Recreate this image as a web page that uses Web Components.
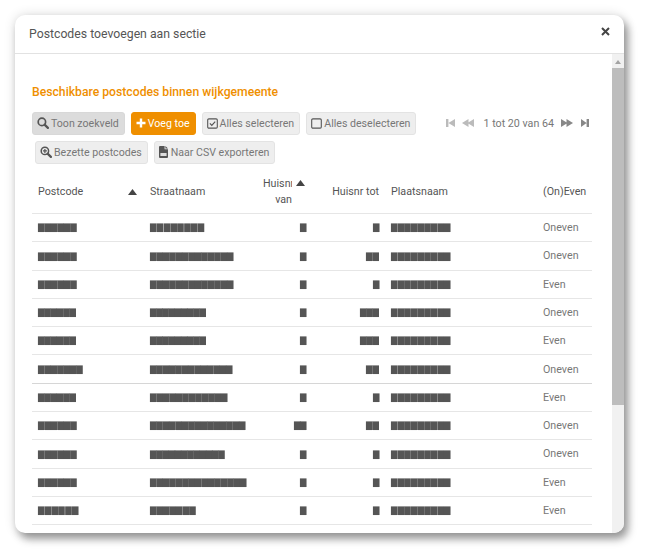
<!DOCTYPE html>
<html lang="nl"><head><meta charset="utf-8"><title>Postcodes</title>
<style>
html,body{margin:0;height:100%;background:#fff;overflow:hidden}
body{font-family:Roboto,"Liberation Sans",sans-serif;color:#555}
</style></head><body>
<pc-dialog heading="Postcodes toevoegen aan sectie">
  <pc-section-title>Beschikbare postcodes binnen wijkgemeente</pc-section-title>
  <pc-toolbar>
    <pc-btn icon="search" active>Toon zoekveld</pc-btn>
    <pc-btn icon="plus" primary>Voeg toe</pc-btn>
    <pc-btn icon="check">Alles selecteren</pc-btn>
    <pc-btn icon="square">Alles deselecteren</pc-btn>
    <pc-pager slot="pager">1 tot 20 van 64</pc-pager>
    <pc-btn slot="second" icon="zoom">Bezette postcodes</pc-btn>
    <pc-btn slot="second" icon="csv">Naar CSV exporteren</pc-btn>
  </pc-toolbar>
  <pc-table></pc-table>
</pc-dialog>
<script>
const ICONS={
 search:'<svg width="12" height="12" viewBox="0 0 12 12"><circle cx="4.9" cy="4.9" r="3.7" fill="none" stroke="currentColor" stroke-width="1.7"/><path d="M7.6 7.6l3.3 3.3" stroke="currentColor" stroke-width="2.2" stroke-linecap="round"/></svg>',
 zoom:'<svg width="12" height="12" viewBox="0 0 12 12"><circle cx="4.9" cy="4.9" r="3.7" fill="none" stroke="currentColor" stroke-width="1.5"/><path d="M7.6 7.6l3.3 3.3" stroke="currentColor" stroke-width="2.2" stroke-linecap="round"/><path d="M4.9 2.9v4M2.9 4.9h4" stroke="currentColor" stroke-width="1.2"/></svg>',
 plus:'<svg width="10" height="10" viewBox="0 0 10 10"><path d="M5 .5v9M.5 5h9" stroke="#fff" stroke-width="2.4"/></svg>',
 check:'<svg width="11" height="11" viewBox="0 0 11 11"><rect x=".7" y=".9" width="9.6" height="9.2" rx="1.2" fill="none" stroke="currentColor" stroke-width="1.1"/><path d="M2.9 5.4l1.9 1.9 3.4-3.6" fill="none" stroke="currentColor" stroke-width="1.2"/></svg>',
 square:'<svg width="11" height="11" viewBox="0 0 11 11"><rect x=".7" y=".9" width="9.6" height="9.2" rx="1.2" fill="none" stroke="currentColor" stroke-width="1.1"/></svg>',
 csv:'<svg width="9" height="12" viewBox="0 0 9 12" style="margin-right:1px"><path d="M0 1a1 1 0 0 1 1-1h4.6v3.2H9V11a1 1 0 0 1-1 1H1a1 1 0 0 1-1-1zM6.4 0L9 2.5H6.4z" fill="#555"/><rect x="1.4" y="7" width="6.2" height="3" fill="#ddd"/></svg>'
};
class Base extends HTMLElement{
  constructor(){super();this.attachShadow({mode:'open'});}
}
class PcDialog extends Base{connectedCallback(){this.shadowRoot.innerHTML=`<style>
:host{display:block;box-sizing:border-box;padding:15px 26px 26px 15px;height:559px}
.box{height:518px;width:609px;background:#fff;border-radius:10px;display:flex;flex-direction:column;overflow:hidden;
 box-shadow:0 0 12px rgba(0,0,0,.14),4px 6px 8px rgba(0,0,0,.38)}
header{flex:none;height:38px;border-bottom:1px solid #e2e2e2;display:flex;align-items:center;justify-content:space-between;padding:0 14px}
h1{margin:0;font:400 12.25px/1 Roboto,sans-serif;color:#555}
.x{width:9px;height:9px;margin-top:-5px}
.body{flex:1;min-height:0;display:flex}
.content{flex:1;min-width:0;padding:30px 20px 0 17px;overflow:hidden}
</style><div class="box"><header><h1>${this.getAttribute('heading')}</h1>
<svg class="x" viewBox="0 0 9 9"><path d="M1 1l7 7M8 1L1 8" stroke="#444" stroke-width="2"/></svg></header>
<div class="body"><div class="content"><slot></slot></div><pc-scrollbar></pc-scrollbar></div></div>`;}}
class PcScrollbar extends Base{connectedCallback(){this.shadowRoot.innerHTML=`<style>
:host{display:block;flex:none;width:12px;background:#f1f1f1;position:relative}
.up{height:14px;display:flex;align-items:center;justify-content:center}
.up i{display:block;border:3px solid transparent;border-top:0;border-bottom:4px solid #a3a3a3;margin-top:1px}
.thumb{height:337px;background:#bdbdbd}
</style><div class="up"><i></i></div><div class="thumb"></div>`;}}
class PcSectionTitle extends Base{connectedCallback(){this.shadowRoot.innerHTML=`<style>
:host{display:block;color:#ef8f00;font:500 12.2px/16px Roboto,sans-serif;margin-bottom:12px}
</style><slot></slot>`;}}
class PcToolbar extends Base{connectedCallback(){this.shadowRoot.innerHTML=`<style>
:host{display:block}
.r1{display:flex;gap:6px;align-items:center;height:23px}
.r2{display:flex;gap:6px;height:23px;margin:6px 0 0 3px}
.sp{flex:1}
</style><div class="r1"><slot></slot><div class="sp"></div><slot name="pager"></slot></div><div class="r2"><slot name="second"></slot></div>`;}}
class PcBtn extends Base{connectedCallback(){const p=this.hasAttribute('primary'),a=this.hasAttribute('active');this.shadowRoot.innerHTML=`<style>
:host{display:inline-flex;align-items:center;box-sizing:border-box;height:23px;padding:0 5px 0 4px;gap:2px;border-radius:3px;white-space:nowrap;
 font:400 10.6px/1 Roboto,sans-serif;background:${p?'#ef8f00':a?'#dcdcdc':'#eee'};color:${p?'#fff':'#777'};border:1px solid ${p?'#ef8f00':a?'#d8d8d8':'#e3e3e3'}}
svg{display:block;flex:none;color:#555;margin-top:-1px}
span{padding-top:1px}
</style>${ICONS[this.getAttribute('icon')]}<span><slot></slot></span>`;}}
const pi=(w,d,c)=>`<svg width="${w}" height="10" viewBox="0 0 ${w} 10" fill="${c}"><path d="${d}"/></svg>`;
class PcPager extends Base{connectedCallback(){this.shadowRoot.innerHTML=`<style>
:host{display:flex;align-items:center;font:400 10.7px/1 Roboto,sans-serif;color:#777;margin-right:3px;white-space:nowrap}
svg{display:block}.a{margin-left:7px}.t{margin:0 7px 0 10px;padding-top:1px}.b{margin-left:8px}
</style>${pi(9,'M0 1h2.4v8H0zM9 1v8L2.4 5z','#bbb')}<span class="a">${pi(12,'M6.5 1v8L0 5zM12 1v8L5.5 5z','#bbb')}</span><span class="t"><slot></slot></span>${pi(12,'M0 1v8l6.5-4zM5.5 1v8l6.5-4z','#888')}<span class="b">${pi(8,'M0 1v8l5.6-4zM5.6 1H8v8H5.6z','#888')}</span>`;}}
const BL=(n,w)=>{const ls=((w-n*6.48)/n).toFixed(2);return `<span class="bl" style="letter-spacing:${ls}px">${'▇'.repeat(n)}</span>`};
const ROWS=[[[6,39],[8,55],[1,6],[1,6],'Oneven'],[[6,39],[13,84],[1,6],[2,13],'Oneven'],[[6,39],[13,84],[1,6],[1,6],'Even'],[[6,38],[9,56],[1,6],[3,19],'Oneven'],[[6,38],[9,56],[1,6],[3,19],'Even'],[[7,45],[13,83],[1,6],[2,13],'Oneven'],[[6,38],[12,78],[1,6],[1,6],'Even'],[[6,39],[15,96],[2,12],[2,13],'Oneven'],[[6,39],[12,75],[1,6],[1,6],'Oneven'],[[6,39],[15,97],[1,6],[1,6],'Even'],[[6,41],[7,46],[1,6],[1,6],'Even']];
const tri='<svg class="tri" width="9" height="6" viewBox="0 0 9 6"><path d="M4.5 0L9 6H0z" fill="#444"/></svg>';
class PcTable extends Base{connectedCallback(){const grid='display:grid;grid-template-columns:112px 113px 49px 73px 1fr 55px;';
this.shadowRoot.innerHTML=`<style>
:host{display:block;font:400 10.7px/1 Roboto,sans-serif;color:#777}
.h,.r{${grid}align-items:center;border-bottom:1px solid #e6e6e6;box-sizing:border-box}
.h{height:50px;color:#555;padding-top:7px}
.r{height:28.3px}
.c{padding-left:6px;white-space:nowrap}
.n{text-align:right;padding:0}
.bl{font:8.4px/10px "DejaVu Sans",sans-serif;color:#555;display:inline-block;will-change:transform}
.pc{display:flex;justify-content:space-between;align-items:center;padding-right:7px}
.hv{position:relative;padding:0;line-height:16px;align-self:start;margin-top:5px}
.hv span{display:block;overflow:hidden;width:29px;margin-left:6px;text-align:right}
.hv .tri{position:absolute;right:1px;top:4px}
.p{padding-left:12px}
.t{padding-top:1.5px}
.dk{border-bottom-color:#d6d6d6}
</style>
<div class="h"><div class="c pc"><span>Postcode</span>${tri}</div><div class="c">Straatnaam</div>
<div class="c hv"><span>Huisnr</span><span>van</span>${tri}</div><div class="c n">Huisnr tot</div><div class="c p">Plaatsnaam</div><div class="c">(On)Even</div></div>
${ROWS.map((r,i)=>`<div class="r${i==5?' dk':''}"><div class="c">${BL(...r[0])}</div><div class="c">${BL(...r[1])}</div><div class="c n">${BL(...r[2])}</div><div class="c n">${BL(...r[3])}</div><div class="c p">${BL(9,60)}</div><div class="c t">${r[4]}</div></div>`).join('')}`;}}
[['pc-dialog',PcDialog],['pc-scrollbar',PcScrollbar],['pc-section-title',PcSectionTitle],['pc-toolbar',PcToolbar],['pc-btn',PcBtn],['pc-pager',PcPager],['pc-table',PcTable]].forEach(([n,c])=>customElements.define(n,c));
</script></body></html>
